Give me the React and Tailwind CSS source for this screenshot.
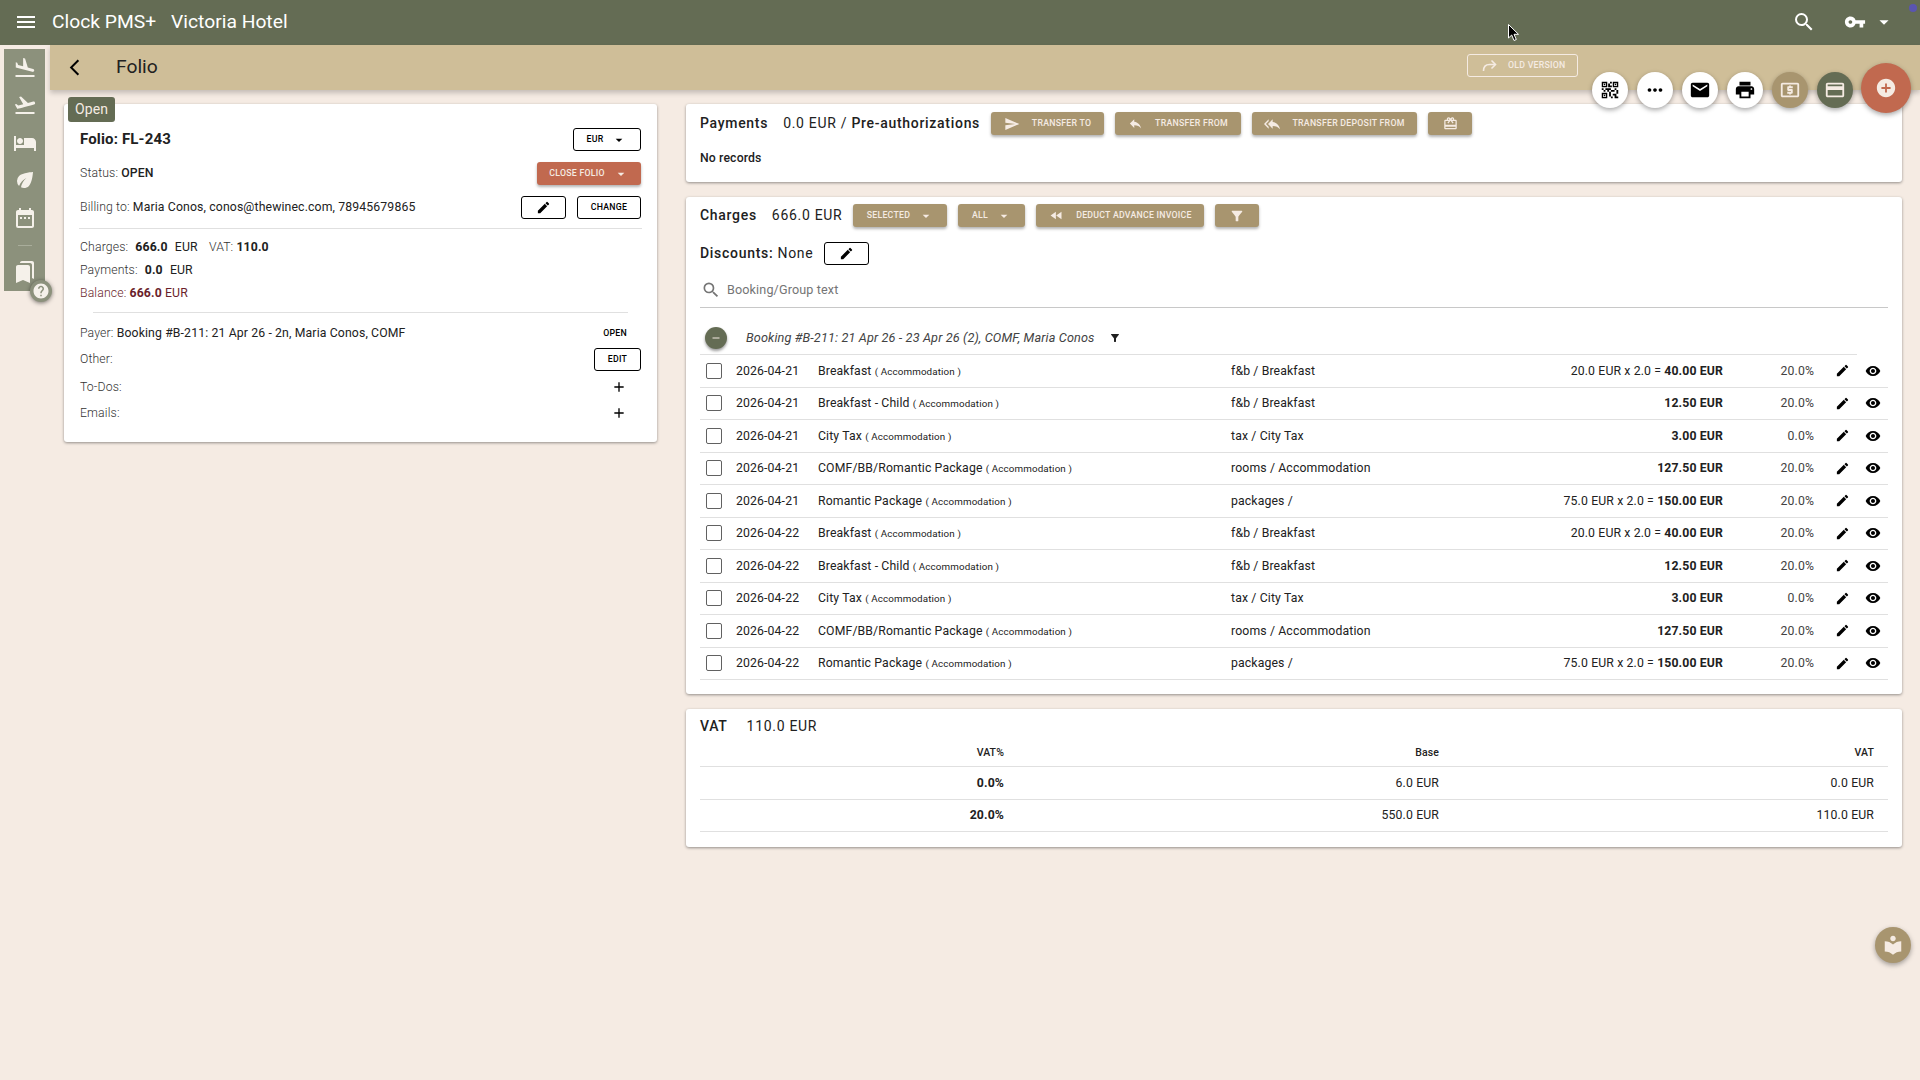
import React from 'react';
import {
  MdMenu, MdSearch, MdVpnKey, MdArrowDropDown, MdQrCode2, MdMoreHoriz, MdEmail, MdPrint, MdLocalAtm,
  MdCreditCard, MdAddCircle, MdArrowBackIosNew, MdEdit, MdVisibility, MdSend, MdReply, MdReplyAll,
  MdRedeem, MdFastRewind, MdFilterAlt, MdRemove, MdFlightLand, MdFlightTakeoff, MdHotel, MdEco, MdDateRange,
  MdBookmarks, MdHelp, MdLocalLibrary, MdAdd,
} from 'react-icons/md';

const charges = [
  ['2026-04-21', 'Breakfast', 'f&b / Breakfast', '20.0 EUR x 2.0 = ', '40.00 EUR', '20.0%'],
  ['2026-04-21', 'Breakfast - Child', 'f&b / Breakfast', '', '12.50 EUR', '20.0%'],
  ['2026-04-21', 'City Tax', 'tax / City Tax', '', '3.00 EUR', '0.0%'],
  ['2026-04-21', 'COMF/BB/Romantic Package', 'rooms / Accommodation', '', '127.50 EUR', '20.0%'],
  ['2026-04-21', 'Romantic Package', 'packages /', '75.0 EUR x 2.0 = ', '150.00 EUR', '20.0%'],
  ['2026-04-22', 'Breakfast', 'f&b / Breakfast', '20.0 EUR x 2.0 = ', '40.00 EUR', '20.0%'],
  ['2026-04-22', 'Breakfast - Child', 'f&b / Breakfast', '', '12.50 EUR', '20.0%'],
  ['2026-04-22', 'City Tax', 'tax / City Tax', '', '3.00 EUR', '0.0%'],
  ['2026-04-22', 'COMF/BB/Romantic Package', 'rooms / Accommodation', '', '127.50 EUR', '20.0%'],
  ['2026-04-22', 'Romantic Package', 'packages /', '75.0 EUR x 2.0 = ', '150.00 EUR', '20.0%'],
];

const vatRows = [
  ['0.0%', '6.0 EUR', '0.0 EUR'],
  ['20.0%', '550.0 EUR', '110.0 EUR'],
];

const sideIcons = [MdFlightLand, MdFlightTakeoff, MdHotel, MdEco, MdDateRange];

const OutlineBtn = ({ className = '', children }) => (
  <button className={`flex h-[23px] items-center justify-center rounded-[3px] border border-black bg-white text-[8.75px] font-medium uppercase tracking-[0.02857em] text-black ${className}`}>
    {children}
  </button>
);

const TanBtn = ({ className = '', children }) => (
  <button className={`flex h-[23px] items-center justify-center rounded-[3px] bg-[#a8956f] text-[8.75px] font-medium uppercase tracking-[0.02857em] text-[#f5ebe3] shadow-[0_2px_3px_rgba(0,0,0,0.3)] ${className}`}>
    {children}
  </button>
);

const Fab = ({ icon: Icon, bg = 'bg-white text-black', size = 22 }) => (
  <div className={`flex h-9 w-9 items-center justify-center rounded-full shadow-[0_2px_5px_rgba(0,0,0,0.35)] ${bg}`}>
    <Icon size={size} />
  </div>
);

const Card = ({ className = '', children }) => (
  <div className={`rounded-[3px] bg-white shadow-[0_1px_3px_rgba(0,0,0,0.4)] ${className}`}>{children}</div>
);

const Label = ({ children }) => <span className="font-light text-[#333]">{children}</span>;

export default function App() {
  return (
    <div className="relative h-[1080px] w-[1920px] overflow-hidden bg-[#f5ebe3] font-['Roboto',sans-serif] text-[12.25px] tracking-[0.01071em] text-[#212121]">
      {/* top bar */}
      <header className="flex h-[45px] items-center bg-[#646c54] pb-[1px] text-white">
        <MdMenu size={24} className="ml-[14px]" />
        <div className="ml-[14px] text-[19.25px] tracking-normal">Clock PMS+</div>
        <div className="ml-[15px] text-[19.25px] tracking-normal">Victoria Hotel</div>
        <MdSearch size={24} className="ml-auto" />
        <MdVpnKey size={22} className="ml-[28px]" />
        <MdArrowDropDown size={22} className="ml-[7px] mr-[25px]" />
      </header>

      <div className="flex">
        {/* side menu */}
        <aside className="relative ml-1 mt-1 flex h-[242px] w-[41px] flex-col items-center bg-[#8c917c] text-[#f5f1ea]">
          {sideIcons.map((Icon, i) => (
            <div key={i} className="flex h-[37.5px] w-full items-center justify-center">
              <Icon size={24} />
            </div>
          ))}
          <div className="mb-[14px] mt-[8.5px] h-px w-[14px] bg-[#a9ad9b]" />
          <MdBookmarks size={24} />
          <div className="absolute left-[26px] top-[231px] flex h-[22px] w-[22px] items-center justify-center rounded-full bg-[#8c917c] shadow-[0_1px_4px_rgba(0,0,0,0.5)]">
            <MdHelp size={18} />
          </div>
        </aside>

        <div className="ml-[5px] flex-1">
          {/* page title */}
          <div className="flex h-[45px] items-center bg-[#cfbe98] shadow-[0_3px_5px_rgba(0,0,0,0.2)]">
            <MdArrowBackIosNew size={19} className="mb-[1px] ml-[15px] text-black" />
            <div className="ml-[32px] text-[19.25px] tracking-normal text-[#212121]">Folio</div>
            <div className="mb-1 ml-auto mr-[342px] flex h-[23px] w-[111px] items-center rounded-[3px] border border-[#f5ebe3] pl-[14px] text-[8.75px] font-medium uppercase tracking-[0.02857em] text-[#f5ebe3]">
              <svg width="15" height="13" viewBox="0 0 15 13" fill="none" className="mr-[11px]">
                <path d="M1.5 12 C1.5 7.5 3.5 5.5 7.5 5.5 L13 5.5" stroke="#f5ebe3" strokeWidth="1.6" />
                <path d="M9.5 1.5 L13.5 5.5 L9.5 9.5" stroke="#f5ebe3" strokeWidth="1.6" />
              </svg>
              Old version
            </div>
          </div>

          <div className="flex items-start">
            {/* folio card */}
            <Card className="relative ml-[14px] mt-[14px] h-[338px] w-[593px] px-4">
              <div className="absolute left-1 top-[-7px] flex h-[25px] w-[47px] items-center justify-center rounded-[3px] bg-[#646c54] text-[14px] text-[#f5ebe3]">Open</div>
              <div className="mt-6 flex h-[23px] items-center justify-between">
                <div className="text-[15px] font-bold tracking-[0.01em]">Folio: FL-243</div>
                <OutlineBtn className="w-[68px]">EUR <MdArrowDropDown size={16} className="ml-2" /></OutlineBtn>
              </div>
              <div className="mt-[11px] flex h-[23px] items-center justify-between">
                <div><Label>Status: </Label><span className="font-medium">OPEN</span></div>
                <TanBtn className="w-[104px] bg-[#c1694f]!">Close Folio <MdArrowDropDown size={16} className="ml-2" /></TanBtn>
              </div>
              <div className="mt-[11px] flex h-[23px] items-center">
                <div><Label>Billing to: </Label>Maria Conos, conos@thewinec.com, 78945679865</div>
                <OutlineBtn className="ml-auto w-[45px]"><MdEdit size={15} /></OutlineBtn>
                <OutlineBtn className="ml-[11px] w-[64px]">Change</OutlineBtn>
              </div>
              <div className="-mx-px mt-[9px] h-px bg-[#e0e0e0]" />
              <div className="mt-[7px] leading-[23px]">
                <div><Label>Charges: </Label> <b className="ml-1 font-bold">666.0</b> <span className="ml-1">EUR</span> <span className="ml-2"><Label>VAT: </Label></span><b className="font-bold">110.0</b></div>
                <div><Label>Payments: </Label> <b className="ml-1 font-bold">0.0</b> <span className="ml-1">EUR</span></div>
                <div className="text-[#6b1f2c]"><span className="font-light">Balance: </span><b className="font-bold">666.0</b> EUR</div>
              </div>
              <div className="mx-[13px] mt-[7px] h-px bg-[#e0e0e0]" />
              <div className="mt-[9px] flex h-[23px] items-center justify-between">
                <div><Label>Payer: </Label>Booking #B-211: 21 Apr 26 - 2n, Maria Conos, COMF</div>
                <div className="mr-[14px] text-[8.75px] font-medium uppercase tracking-[0.02857em] text-black">Open</div>
              </div>
              <div className="mt-[3px] flex h-[23px] items-center justify-between">
                <Label>Other:</Label>
                <OutlineBtn className="w-[47px]">Edit</OutlineBtn>
              </div>
              <div className="mt-[5px] flex h-[23px] items-center justify-between">
                <Label>To-Dos:</Label>
                <MdAdd size={16} className="mb-[2px] mr-[14px] text-black" />
              </div>
              <div className="mt-[3px] flex h-[23px] items-center justify-between">
                <Label>Emails:</Label>
                <MdAdd size={16} className="mb-[1px] mr-[14px] text-black" />
              </div>
            </Card>

            <div className="ml-[29px] mt-[14px] w-[1216px]">
              {/* payments */}
              <Card className="h-[78px] px-[14px]">
                <div className="flex h-[39px] items-center text-[14px] tracking-[0.05em]">
                  <div className="font-medium">Payments</div>
                  <div className="ml-[15px]">0.0 EUR / <span className="font-medium">Pre-authorizations</span></div>
                  <TanBtn className="ml-[11px] w-[113px]"><MdSend size={16} className="mr-[12px]" />Transfer to</TanBtn>
                  <TanBtn className="ml-[11px] w-[126px]"><MdReply size={15} className="mr-[12px]" />Transfer from</TanBtn>
                  <TanBtn className="ml-[11px] w-[165px]"><MdReplyAll size={16} className="mr-[12px]" />Transfer deposit from</TanBtn>
                  <TanBtn className="ml-[11px] w-[44px]"><MdRedeem size={15} /></TanBtn>
                </div>
                <div className="mt-[6px] font-medium">No records</div>
              </Card>

              {/* charges */}
              <Card className="mt-[15px] h-[497px] px-[14px]">
                <div className="flex h-[37px] items-center text-[14px] tracking-[0.05em]">
                  <div className="font-medium">Charges</div>
                  <div className="ml-[15px]">666.0 EUR</div>
                  <TanBtn className="ml-[11px] w-[94px]">Selected <MdArrowDropDown size={16} className="ml-2" /></TanBtn>
                  <TanBtn className="ml-[11px] w-[67px]">All <MdArrowDropDown size={16} className="ml-2" /></TanBtn>
                  <TanBtn className="ml-[11px] w-[168px]"><MdFastRewind size={15} className="mr-[12px]" />Deduct advance invoice</TanBtn>
                  <TanBtn className="ml-[11px] w-[44px]"><MdFilterAlt size={16} /></TanBtn>
                </div>
                <div className="flex h-[39px] items-center text-[14px] tracking-[0.05em]">
                  <span className="font-medium">Discounts:</span>&nbsp;None
                  <OutlineBtn className="ml-[11px] w-[45px]"><MdEdit size={15} /></OutlineBtn>
                </div>
                <div className="flex h-[35px] items-center border-b border-[#c8c8c8]">
                  <MdSearch size={20} className="ml-[1px] text-[#757575]" />
                  <span className="ml-[6px] text-[12.6px] text-[#757575]">Booking/Group text</span>
                </div>
                <div className="mr-[31px] flex h-[47px] items-center border-b border-[#e0e0e0] pt-[14px] text-[12.7px] italic text-[#424242]">
                  <div className="ml-[5px] flex h-[22px] w-[22px] items-center justify-center rounded-full bg-[#646c54] text-[#f5ebe3] shadow-[0_2px_3px_rgba(0,0,0,0.4)]"><MdRemove size={12} /></div>
                  <span className="ml-[19px]">Booking #B-211: 21 Apr 26 - 23 Apr 26 (2), COMF, Maria Conos</span>
                  <MdFilterAlt size={12} className="ml-[14px] text-[#212121]" />
                </div>
                {charges.map((row, i) => (
                  <div key={i} className="grid h-[32.5px] grid-cols-[36px_82px_413px_150px_342px_91px_1fr] items-center border-b border-[#e0e0e0]">
                    <div className="ml-[6px] h-4 w-4 rounded-[2px] border border-[#616161]" />
                    <div>{row[0]}</div>
                    <div>{row[1]} <span className="text-[9.8px]">( Accommodation )</span></div>
                    <div>{row[2]}</div>
                    <div className="text-right">{row[3]}<b className="font-bold">{row[4]}</b></div>
                    <div className="text-right text-[#424242]">{row[5]}</div>
                    <div className="flex items-center pl-[21px] text-black">
                      <MdEdit size={15} />
                      <MdVisibility size={16} className="ml-[15px]" />
                    </div>
                  </div>
                ))}
              </Card>

              {/* vat */}
              <Card className="mt-[15px] h-[138px] px-[14px]">
                <div className="flex h-[34px] items-center pt-[1px] text-[14px] tracking-[0.05em]">
                  <span className="font-medium">VAT</span>
                  <span className="ml-[19px]">110.0 EUR</span>
                </div>
                <div className="grid h-[24px] grid-cols-[318px_435px_435px] items-center border-b border-[#e0e0e0] pb-1 text-[10.5px] font-medium">
                  <div className="pr-[14px] text-right">VAT%</div>
                  <div className="pr-[14px] text-right">Base</div>
                  <div className="pr-[14px] text-right">VAT</div>
                </div>
                {vatRows.map((row, i) => (
                  <div key={i} className="grid h-[32.5px] grid-cols-[318px_435px_435px] items-center border-b border-[#e0e0e0]">
                    <div className="pr-[14px] text-right font-bold">{row[0]}</div>
                    <div className="pr-[14px] text-right">{row[1]}</div>
                    <div className="pr-[14px] text-right">{row[2]}</div>
                  </div>
                ))}
              </Card>
            </div>
          </div>
        </div>
      </div>

      {/* floating actions */}
      <div className="absolute left-[1592px] top-[72px] flex gap-[9px]">
        <Fab icon={MdQrCode2} />
        <Fab icon={MdMoreHoriz} />
        <Fab icon={MdEmail} />
        <Fab icon={MdPrint} />
        <Fab icon={MdLocalAtm} bg="bg-[#a8956f] text-[#f5ebe3]" />
        <Fab icon={MdCreditCard} bg="bg-[#646c54] text-[#f5ebe3]" />
      </div>
      <div className="absolute left-[1861px] top-[63px] flex h-[50px] w-[50px] items-center justify-center rounded-full bg-[#c1694f] text-[#f5ebe3] shadow-[0_2px_5px_rgba(0,0,0,0.35)]">
        <MdAddCircle size={22} />
      </div>
      <div className="absolute left-[1875px] top-[927px] flex h-9 w-9 items-center justify-center rounded-full bg-[#a8956f] text-[#f5ebe3] shadow-[0_2px_5px_rgba(0,0,0,0.35)]">
        <MdLocalLibrary size={22} />
      </div>
      <div className="absolute left-[1909px] top-[4px] h-2 w-2 rounded-full bg-[#5a55b0]" />

      {/* mouse pointer */}
      <svg className="absolute left-[1508px] top-[24px]" width="12" height="18" viewBox="0 0 12 18">
        <path d="M0.5 0.5 L0.5 14 L3.7 11 L6 16.5 L8.3 15.5 L6 10.3 L10.5 10.3 Z" fill="#000" stroke="#fff" strokeWidth="1" />
      </svg>
    </div>
  );
}
